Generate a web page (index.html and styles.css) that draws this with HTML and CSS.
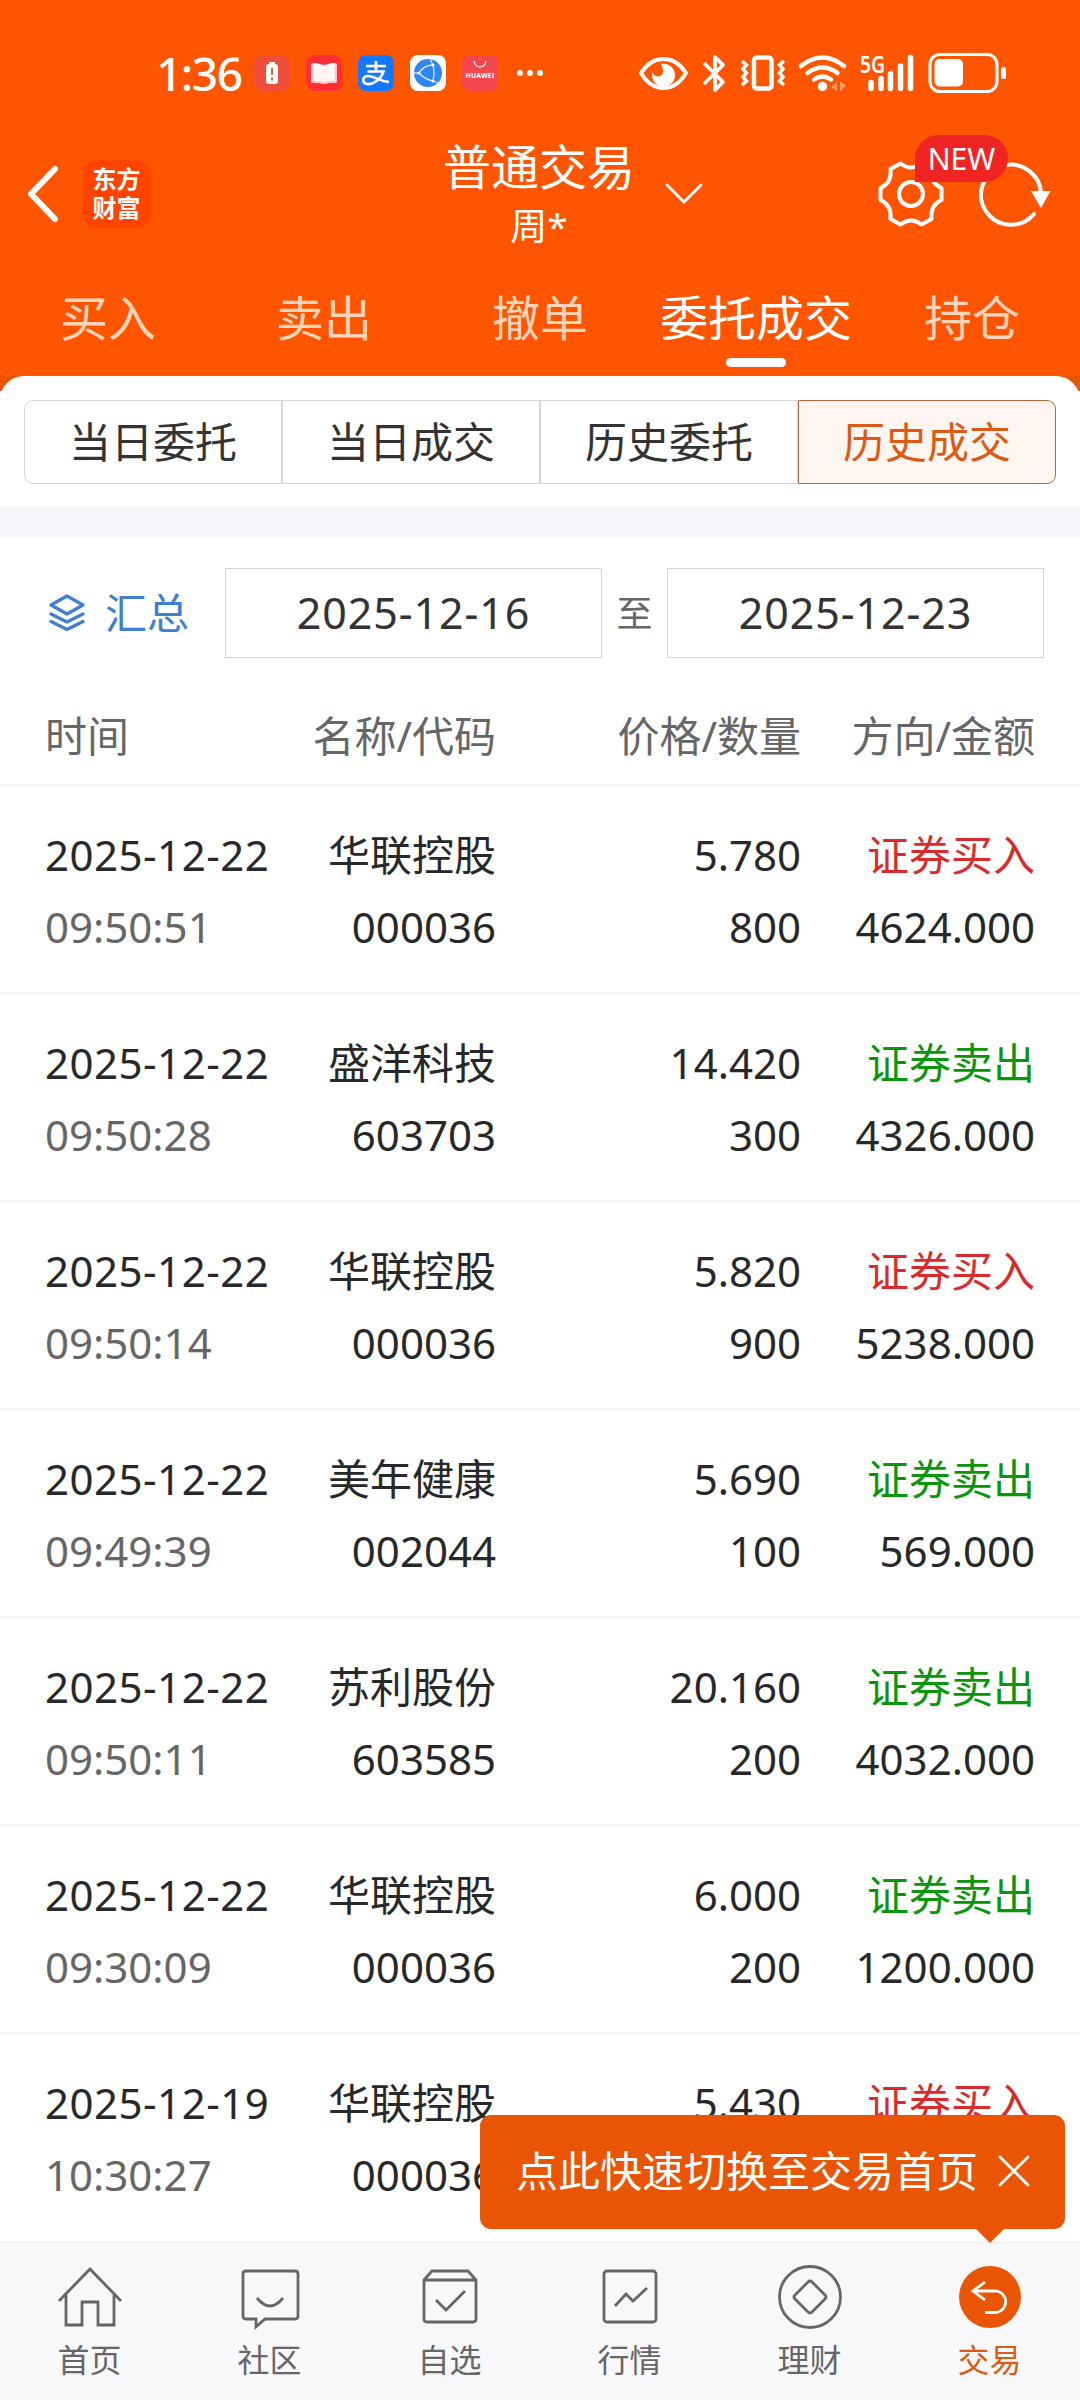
FILE: index.html
```
<!DOCTYPE html>
<html lang="zh-CN">
<head>
    <meta charset="UTF-8">
    <meta name="viewport" content="width=device-width, initial-scale=1.0">
    <title>历史成交</title>
    <link rel="stylesheet" href="styles.css">
</head>
<body>
<div class="page">

    <header class="header">
        <div class="status">
            <span class="clock">1:36</span>
            <div class="apps">
                <svg class="app" viewBox="0 0 36 36">
                    <rect width="36" height="36" rx="9" fill="#ee4e3a"/>
                    <path d="M15 7h6v2.500h-6z" fill="#fff"/>
                    <rect x="12" y="9" width="12" height="20" rx="3" fill="#fff"/>
                    <path d="M18 13v7M18 22.500v3" stroke="#d9604c" stroke-width="2"/>
                </svg>
                <svg class="app" viewBox="0 0 36 36">
                    <rect width="36" height="36" rx="9" fill="#ff2f35"/>
                    <path d="M5 10q0-2 2-2h4q3 2 7 2t7-2h4q2 0 2 2v16q0 2-2 2h-6q-5 2-10 0H7q-2 0-2-2z" fill="#ffc4c0"/>
                    <path d="M7 8h4q3 2 7 2t7-2h4v18h-6q-5 2-10 0H7z" fill="#fff5f3"/>
                </svg>
                <svg class="app" viewBox="0 0 36 36">
                    <rect width="36" height="36" rx="8" fill="#1677ff"/>
                    <path d="M8 11h20M18 6v10M9.500 16.500h16C23 24 15 30 9 29c-5-1-5-7 0-8 6-1 11 5 22 6" fill="none" stroke="#fff" stroke-width="2.600"/>
                </svg>
                <svg class="app" viewBox="0 0 36 36">
                    <rect width="36" height="36" rx="8" fill="#fff"/>
                    <circle cx="18" cy="18" r="14" fill="#2f86f0"/>
                    <path d="M4 18h5M9 18Q14 10 23 10M9 18Q14 24 23 26M23 10Q25 18 23 26M23 10L20 4M23 26l5 2" fill="none" stroke="#cfe5ff" stroke-width="1.300"/>
                    <circle cx="9" cy="18" r="1.500" fill="#fff"/>
                    <circle cx="23" cy="10" r="1.500" fill="#fff"/>
                    <circle cx="23" cy="26" r="1.500" fill="#fff"/>
                </svg>
                <svg class="app" viewBox="0 0 36 36">
                    <rect width="36" height="36" rx="8" fill="#f4484f"/>
                    <path d="M12 6q1 6 6 6t6-6" fill="none" stroke="#fff" stroke-width="1.200"/>
                    <text class="brand" x="18" y="23" text-anchor="middle" textLength="29">HUAWEI</text>
                </svg>
            </div>
            <svg class="more" width="28" height="8" viewBox="0 0 28 8" fill="#fff">
                <circle cx="4" cy="4" r="3"/><circle cx="14" cy="4" r="3"/><circle cx="24" cy="4" r="3"/>
            </svg>

            <svg class="signals" width="370" height="60" viewBox="638 43 370 60" fill="none" stroke="#fff">
                <!-- eye comfort -->
                <path d="M641 73Q650 59 663.500 59T686 73Q677 88 663.500 88T641 73z" stroke-width="4" stroke-linejoin="round"/>
                <path d="M661 64a11.500 11.500 0 1 1-8.500 8q2 5 6 4.500 5-1 4.500-6-.5-4-2-6.500z" fill="#fff" stroke="none"/>
                <!-- bluetooth -->
                <path d="M704 63l19 19-8 8V57l8 8-19 19" stroke-width="3.800" stroke-linejoin="round"/>
                <!-- vibrate -->
                <rect x="754" y="57.500" width="17.500" height="31" rx="3" stroke-width="4.500"/>
                <path d="M742 61l4.500 4-3.500 4 3.500 4-3.500 4 3.500 4-4.500 4M784 61l-4.500 4 3.500 4-3.500 4 3.500 4-3.500 4 4.500 4" stroke-width="3.500"/>
                <!-- wifi -->
                <path d="M801 66q21.500-17 43 0M807.500 73q15-11 30 0M814 79.500q8.500-6 17 0" stroke-width="4.500" stroke-linecap="round"/>
                <circle cx="822.500" cy="86.500" r="4.700" fill="#fff" stroke="none"/>
                <path d="M831 87l6-5v9zM846 85.500l-6-4v10z" fill="#ff9a66" stroke="none"/>
                <!-- mobile signal -->
                <text class="net" x="860" y="73" textLength="25" lengthAdjust="spacingAndGlyphs">5G</text>
                <path d="M871 82.500v6M881 78.500v10M890.500 73.500v15M900.500 66v22.500M910.500 57.500v31" stroke-width="5.500" stroke-linecap="round"/>
                <!-- battery -->
                <rect x="930" y="54.500" width="67" height="37" rx="10" stroke-width="3"/>
                <rect x="934.500" y="59" width="28.500" height="27.500" rx="5" fill="#fff" stroke="none"/>
                <rect x="1001" y="67" width="5" height="12" rx="2.500" fill="#fff" stroke="none"/>
            </svg>
        </div>

        <div class="titlebar">
            <svg class="back" width="34" height="58" viewBox="0 0 34 58">
                <path d="M29 4L5 29l24 25" fill="none" stroke="#fff" stroke-width="6" stroke-linecap="round" stroke-linejoin="round"/>
            </svg>
            <div class="logo">东方<br>财富</div>
            <div class="title">
                <h1>普通交易</h1>
                <p>周*</p>
            </div>
            <svg class="drop" width="38" height="22" viewBox="0 0 38 22">
                <path d="M2 2l17 17L36 2" fill="none" stroke="#fff" stroke-width="2.800" stroke-linecap="round"/>
            </svg>
            <div class="tools">
                <svg width="70" height="70" viewBox="-35 -35 70 70" fill="none" stroke="#fff" stroke-width="4">
                    <path d="M-10.500-30.500Q0-22.500 10.500-30.500L20.500-25Q19-11 30.500-6V6Q19 11 20.500 25L10.500 30.500Q0 22.500-10.500 30.500L-20.500 25Q-19 11-30.500 6V-6Q-19-11-20.500-25z" stroke-linejoin="round"/>
                    <circle r="12"/>
                </svg>
                <svg width="76" height="70" viewBox="-35 -35 76 70">
                    <path d="M23 20A30 30 0 1 1 30 0" fill="none" stroke="#fff" stroke-width="4" stroke-linecap="round"/>
                    <path d="M20-3h19.500L30 14z" fill="#fff"/>
                </svg>
                <span class="badge">NEW</span>
            </div>
        </div>

        <nav class="tabs">
            <a>买入</a>
            <a>卖出</a>
            <a>撤单</a>
            <a class="active">委托成交</a>
            <a>持仓</a>
        </nav>
    </header>

    <div class="sheet">
        <div class="segments">
            <span>当日委托</span>
            <span>当日成交</span>
            <span>历史委托</span>
            <span class="active">历史成交</span>
        </div>
    </div>

    <div class="filter">
        <div class="summary">
            <svg width="36" height="38" viewBox="0 0 36 38" fill="none" stroke="#3f7fd0" stroke-width="3.200" stroke-linejoin="round" stroke-linecap="round">
                <path d="M18 2L34 11 18 20 2 11zM2 20l16 8 16-8M2 27.500l16 8 16-8"/>
            </svg>
            汇总
        </div>
        <div class="date-box">2025-12-16</div>
        <span class="to">至</span>
        <div class="date-box">2025-12-23</div>
    </div>

    <div class="list">
        <div class="row head">
            <span>时间</span><span>名称/代码</span><span>价格/数量</span><span>方向/金额</span>
        </div>
        <div class="row">
            <span class="day">2025-12-22</span><span>华联控股</span><span>5.780</span><span class="buy">证券买入</span>
            <span class="time">09:50:51</span><span>000036</span><span>800</span><span>4624.000</span>
        </div>
        <div class="row">
            <span class="day">2025-12-22</span><span>盛洋科技</span><span>14.420</span><span class="sell">证券卖出</span>
            <span class="time">09:50:28</span><span>603703</span><span>300</span><span>4326.000</span>
        </div>
        <div class="row">
            <span class="day">2025-12-22</span><span>华联控股</span><span>5.820</span><span class="buy">证券买入</span>
            <span class="time">09:50:14</span><span>000036</span><span>900</span><span>5238.000</span>
        </div>
        <div class="row">
            <span class="day">2025-12-22</span><span>美年健康</span><span>5.690</span><span class="sell">证券卖出</span>
            <span class="time">09:49:39</span><span>002044</span><span>100</span><span>569.000</span>
        </div>
        <div class="row">
            <span class="day">2025-12-22</span><span>苏利股份</span><span>20.160</span><span class="sell">证券卖出</span>
            <span class="time">09:50:11</span><span>603585</span><span>200</span><span>4032.000</span>
        </div>
        <div class="row">
            <span class="day">2025-12-22</span><span>华联控股</span><span>6.000</span><span class="sell">证券卖出</span>
            <span class="time">09:30:09</span><span>000036</span><span>200</span><span>1200.000</span>
        </div>
        <div class="row">
            <span class="day">2025-12-19</span><span>华联控股</span><span>5.430</span><span class="buy">证券买入</span>
            <span class="time">10:30:27</span><span>000036</span><span></span><span></span>
        </div>
    </div>

    <footer class="bottom">
        <div class="tip">
            点此快速切换至交易首页
            <svg width="32" height="32" viewBox="0 0 32 32">
                <path d="M2 2l28 28M30 2L2 30" stroke="#fff" stroke-width="2.800" stroke-linecap="round"/>
            </svg>
        </div>
        <a>
            <svg viewBox="-35 -35 70 70">
                <path d="M-31 4L0-28 31 4M-24-2V28H-8V5H8V28H24V-2"/>
            </svg>
            首页
        </a>
        <a>
            <svg viewBox="-35 -35 70 70">
                <path d="M-24-26H25q3 0 3 3V19q0 3-3 3H-5l-9 8V22H-24q-3 0-3-3V-23q0-3 3-3zM-13 1Q0 17 13 1"/>
            </svg>
            社区
        </a>
        <a>
            <svg viewBox="-35 -35 70 70">
                <path d="M-26-17l8-9H18l8 9V22q0 3-3 3H-23q-3 0-3-3zH26M-14 3L-4 13 15-6"/>
            </svg>
            自选
        </a>
        <a>
            <svg viewBox="-35 -35 70 70">
                <rect x="-26" y="-26" width="52" height="51" rx="3"/>
                <path d="M-15 9L-4-3 3 4 17-9"/>
            </svg>
            行情
        </a>
        <a>
            <svg viewBox="-35 -35 70 70">
                <circle r="30.500"/>
                <path d="M-2-15q2-2 4 0L15-2q2 2 0 4L2 15q-2 2-4 0L-15 2q-2-2 0-4z"/>
            </svg>
            理财
        </a>
        <a class="active">
            <svg viewBox="-35 -35 70 70">
                <circle class="disc" r="31"/>
                <path d="M-5-15L-17-6-5 3M-17-6H7A11 11 0 0 1 7 15.500H-5"/>
            </svg>
            交易
        </a>
    </footer>

</div>
</body>
</html>
```

FILE: styles.css
```
* {
    box-sizing: border-box;
}
body {
    margin: 0;
    background: #fff;
    color: #282828;
    font-family: "Noto Sans", "Noto Sans CJK SC", sans-serif;
    font-size: 42px;
}
svg {
    display: block;
    flex: none;
}
.page {
    width: 1080px;
    height: 2400px;
    display: flex;
    flex-direction: column;
    overflow: hidden;
}

/* header */
.header {
    height: 376px;
    flex: none;
    background: #ff5500;
    color: #fff;
}
.status {
    height: 134px;
    padding: 12px 72px 0 156px;
    display: flex;
    align-items: center;
}
.clock {
    width: 98px;
    font-size: 46px;
    font-weight: 500;
    line-height: 60px;
    letter-spacing: -1.5px;
}
.apps {
    display: flex;
    gap: 16px;
}
.app {
    width: 36px;
    height: 36px;
}
.brand {
    font: bold 7px "Noto Sans", sans-serif;
    fill: #fff;
}
.more {
    margin-left: 18px;
}
.signals {
    margin-left: auto;
}
.net {
    font: 600 24px "Noto Sans", sans-serif;
    fill: #fff;
    stroke: none;
}
.titlebar {
    height: 120px;
    padding-left: 26px;
    display: flex;
    align-items: center;
}
.logo {
    width: 68px;
    height: 68px;
    margin-left: 23px;
    padding: 4px 1px 0 0;
    border-radius: 14px;
    background: #ff4400;
    font-size: 24px;
    font-weight: 700;
    line-height: 29px;
    text-align: center;
}
.title {
    width: 200px;
    margin-left: 288px;
    padding-top: 4px;
    text-align: center;
}
.title h1 {
    margin: 0;
    font-size: 48px;
    font-weight: 400;
    line-height: 60px;
}
.title p {
    margin: 0;
    font-size: 37px;
    line-height: 58px;
}
.drop {
    margin-left: 26px;
}
.tools {
    position: relative;
    display: flex;
    gap: 30px;
    margin-left: 173px;
}
.badge {
    position: absolute;
    left: 39px;
    top: -24px;
    width: 93px;
    height: 47px;
    border-radius: 24px 24px 24px 0;
    background: #f02523;
    font-size: 30px;
    line-height: 47px;
    text-align: center;
}
.tabs {
    height: 122px;
    display: grid;
    grid-template-columns: repeat(5, 1fr);
}
.tabs a {
    display: flex;
    flex-direction: column;
    align-items: center;
    padding-top: 34px;
    color: #ffd4b8;
    font-size: 48px;
    line-height: 60px;
    white-space: nowrap;
}
.tabs .active {
    color: #fff;
}
.tabs .active::after {
    content: "";
    width: 60px;
    height: 9px;
    margin-top: 10px;
    border-radius: 5px;
    background: #fff;
}

/* order / deal switch */
.sheet {
    height: 162px;
    flex: none;
    border-bottom: 31px solid #f6f7fa;
    background: linear-gradient(#ea5504 15px, #fff 15px);
}
.segments {
    height: 131px;
    padding: 24px 24px 23px;
    border-radius: 24px 24px 0 0;
    background: #fff;
    display: grid;
    grid-template-columns: repeat(4, 1fr);
}
.segments span {
    border: 1px solid #d5d8d8;
    color: #333;
    line-height: 82px;
    text-align: center;
}
.segments span:first-child {
    border-radius: 9px 0 0 9px;
}
.segments .active {
    border-color: #b9673a;
    border-radius: 0 9px 9px 0;
    background: #fff5f1;
    color: #dc5a14;
}

/* date filter */
.filter {
    height: 150px;
    flex: none;
    padding: 0 36px 0 49px;
    display: flex;
    align-items: center;
    color: #333;
}
.summary {
    width: 176px;
    display: flex;
    align-items: center;
    gap: 20px;
    color: #3f7fd0;
    line-height: 60px;
}
.date-box {
    width: 377px;
    height: 90px;
    border: 1px solid #d4d6d6;
    font-size: 43px;
    line-height: 88px;
    letter-spacing: 0.9px;
    text-align: center;
}
.to {
    flex: 1;
    color: #666;
    font-size: 36px;
    line-height: 60px;
    padding-top: 2px;
    text-align: center;
}

/* deals */
.list {
    flex: 1;
    overflow: hidden;
}
.row {
    height: 208px;
    padding: 32px 0 0 45px;
    border-bottom: 3px solid #f7f7f7;
    display: grid;
    grid-template-columns: 230px 221px 305px 234px;
    grid-auto-rows: 72px;
    line-height: 72px;
    text-align: right;
}
.row:last-child {
    border-bottom: none;
}
.head {
    height: 99px;
    padding-top: 12px;
    color: #666;
}
.row .day,
.row .time,
.head span:first-child {
    text-align: left;
}
.day {
    letter-spacing: 0.5px;
}
.time {
    color: #666;
}
.buy {
    color: #d92b2b;
}
.sell {
    color: #0a960a;
}

/* bottom bar */
.bottom {
    position: relative;
    height: 158px;
    flex: none;
    border-top: 1px solid #ebebeb;
    background: #f8f8fa;
    display: grid;
    grid-template-columns: repeat(6, 1fr);
}
.bottom a {
    display: flex;
    flex-direction: column;
    align-items: center;
    padding: 19px 1px 0 0;
    color: #666;
    font-size: 32px;
    line-height: 55px;
}
.bottom a svg {
    width: 70px;
    height: 70px;
    fill: none;
    stroke: #666;
    stroke-width: 2.8;
}
.bottom .active {
    color: #dc5a14;
}
.bottom .active svg {
    stroke: #fff;
}
.bottom .disc {
    fill: #ea5504;
    stroke: none;
}
.tip {
    position: absolute;
    right: 15px;
    bottom: 171px;
    width: 585px;
    height: 114px;
    padding: 0 35px 2px 36px;
    border-radius: 11px;
    background: #ea5504;
    color: #fff;
    line-height: 110px;
    white-space: nowrap;
    display: flex;
    align-items: center;
    justify-content: space-between;
}
.tip::after {
    content: "";
    position: absolute;
    top: 113px;
    right: 60px;
    border: 15px solid transparent;
    border-top-color: #ea5504;
    border-bottom: none;
}
```
